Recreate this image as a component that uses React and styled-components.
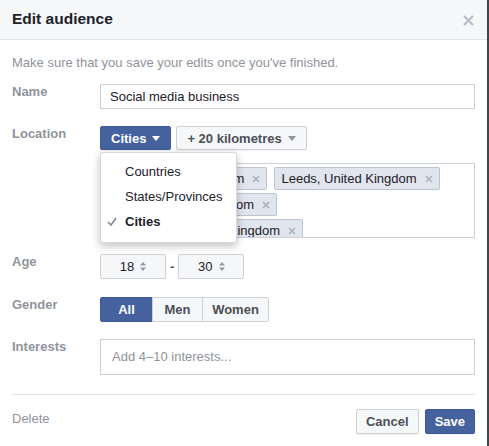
import React from "react";
import styled, { createGlobalStyle } from "styled-components";

const GlobalStyle = createGlobalStyle`
  html, body {
    margin: 0;
    padding: 0;
    background: #41444b;
  }
  body {
    font-family: "Liberation Sans", Arial, Helvetica, sans-serif;
    -webkit-font-smoothing: antialiased;
  }
`;

const tags = [
  "Derby, United Kingdom",
  "Leeds, United Kingdom",
  "London, United Kingdom",
  "Birmingham, United Kingdom",
];

const menuItems = [
  { label: "Countries" },
  { label: "States/Provinces" },
  { label: "Cities", checked: true },
];

function Caret({ color = "#fff" }) {
  return (
    <svg width="8" height="5" viewBox="0 0 8 5">
      <path d="M0 0h8L4 5z" fill={color} />
    </svg>
  );
}

function Spinner() {
  return (
    <svg width="6" height="9" viewBox="0 0 6 9">
      <path d="M3 0l3 3.4H0z M3 9l3-3.4H0z" fill="#9197a3" />
    </svg>
  );
}

function CloseIcon() {
  return (
    <svg width="11" height="11" viewBox="0 0 11 11">
      <path d="M1 1l9 9M10 1l-9 9" stroke="#b6bbc4" strokeWidth="2" />
    </svg>
  );
}

function TagX() {
  return (
    <svg width="8" height="8" viewBox="0 0 8 8">
      <path d="M1 1l6 6M7 1l-6 6" stroke="#aab0bc" strokeWidth="1.6" />
    </svg>
  );
}

function Check() {
  return (
    <svg width="10" height="9" viewBox="0 0 10 9">
      <path d="M1 5l3 3 5-7" stroke="#7f838c" strokeWidth="1.5" fill="none" />
    </svg>
  );
}

export default function App() {
  return (
    <>
      <GlobalStyle />
      <Dialog>
        <Header>
          <Title>Edit audience</Title>
          <CloseButton>
            <CloseIcon />
          </CloseButton>
        </Header>
        <Body>
          <Hint>Make sure that you save your edits once you've finished.</Hint>

          <Field $top={13}>
            <Label>Name</Label>
            <TextInput>Social media business</TextInput>
          </Field>

          <Field $top={17}>
            <Label>Location</Label>
            <LocationControl>
              <ButtonRow>
                <Button $primary>
                  Cities <Caret />
                </Button>
                <Button>
                  + 20 kilometres <Caret color="#8d949e" />
                </Button>
              </ButtonRow>
              <TagBox>
                {tags.map((t) => (
                  <Tag key={t}>
                    {t}
                    <TagX />
                  </Tag>
                ))}
              </TagBox>
              <Menu>
                {menuItems.map((m) => (
                  <MenuItem key={m.label} $checked={m.checked}>
                    <CheckSlot>{m.checked && <Check />}</CheckSlot>
                    {m.label}
                  </MenuItem>
                ))}
              </Menu>
            </LocationControl>
          </Field>

          <Field $top={16}>
            <Label>Age</Label>
            <ButtonRow>
              <AgeSelect>
                18 <Spinner />
              </AgeSelect>
              <Dash>-</Dash>
              <AgeSelect>
                30 <Spinner />
              </AgeSelect>
            </ButtonRow>
          </Field>

          <Field $top={18}>
            <Label>Gender</Label>
            <Segmented>
              <Segment $active $w={53}>All</Segment>
              <Segment $w={51}>Men</Segment>
              <Segment $w={67}>Women</Segment>
            </Segmented>
          </Field>

          <Field $top={17}>
            <Label>Interests</Label>
            <InterestInput>Add 4–10 interests...</InterestInput>
          </Field>

          <Divider />

          <Footer>
            <DeleteLink>Delete</DeleteLink>
            <FooterButtons>
              <Button>Cancel</Button>
              <Button $primary>Save</Button>
            </FooterButtons>
          </Footer>
        </Body>
      </Dialog>
    </>
  );
}

const Dialog = styled.div`
  width: 487px;
  height: 446px;
  background: #fff;
  overflow: hidden;
  color: #1d2129;
`;

const Header = styled.div`
  height: 40px;
  box-sizing: border-box;
  background: #f6f7f9;
  border-bottom: 1px solid #e5e5e5;
  display: flex;
  align-items: center;
  justify-content: space-between;
  padding: 0 13px 0 12px;
`;

const Title = styled.div`
  font-size: 15.5px;
  font-weight: bold;
  color: #1d2129;
  margin-top: -2px;
`;

const CloseButton = styled.div`
  display: flex;
  margin-top: 2px;
`;

const Body = styled.div`
  padding: 15px 11px 0 12px;
`;

const Hint = styled.div`
  font-size: 13px;
  line-height: 16px;
  color: #90949c;
`;

const Field = styled.div`
  display: grid;
  grid-template-columns: 88px 375px;
  align-items: start;
  margin-top: ${(p) => p.$top}px;
`;

const Label = styled.div`
  font-size: 13px;
  font-weight: bold;
  line-height: 16px;
  color: #90949c;
`;

const TextInput = styled.div`
  height: 25px;
  box-sizing: border-box;
  border: 1px solid #ccd0d5;
  padding: 0 9px;
  font-size: 13px;
  line-height: 23px;
  color: #1d2129;
`;

const LocationControl = styled.div`
  position: relative;
`;

const ButtonRow = styled.div`
  display: flex;
  align-items: center;
  gap: 5px;
`;

const Button = styled.div`
  height: 24px;
  box-sizing: border-box;
  display: inline-flex;
  align-items: center;
  gap: 6px;
  padding: 0 10px;
  border-radius: 2px;
  font-size: 13px;
  font-weight: bold;
  border: 1px solid ${(p) => (p.$primary ? "#3d5a96" : "#ced0d4")};
  background: ${(p) => (p.$primary ? "#45629f" : "#f6f7f9")};
  color: ${(p) => (p.$primary ? "#fff" : "#4b4f56")};
  box-shadow: 0 1px 1px rgba(0, 0, 0, 0.05);
`;

const TagBox = styled.div`
  margin-top: 13px;
  height: 75px;
  box-sizing: border-box;
  border: 1px solid #ccd0d5;
  padding: 3px;
  overflow: hidden;
  display: flex;
  flex-wrap: wrap;
  align-content: flex-start;
  gap: 3px 7px;
`;

const Tag = styled.div`
  height: 23px;
  box-sizing: border-box;
  display: inline-flex;
  align-items: center;
  gap: 8px;
  padding: 0 6px;
  background: #e1e5ee;
  border: 1px solid #bcc3d3;
  border-radius: 2px;
  font-size: 13px;
  color: #1d2129;
`;

const Menu = styled.div`
  position: absolute;
  top: 26px;
  left: 0;
  width: 137px;
  box-sizing: border-box;
  padding: 6px 0 8px;
  background: #fff;
  border: 1px solid rgba(0, 0, 0, 0.15);
  border-radius: 3px;
  box-shadow: 0 3px 8px rgba(0, 0, 0, 0.25);
`;

const MenuItem = styled.div`
  height: 25px;
  display: flex;
  align-items: center;
  font-size: 13px;
  font-weight: ${(p) => (p.$checked ? "bold" : "normal")};
  color: #1d2129;
`;

const CheckSlot = styled.span`
  width: 24px;
  display: inline-flex;
  justify-content: flex-end;
  box-sizing: border-box;
  padding-right: 8px;
`;

const AgeSelect = styled.div`
  width: 66px;
  height: 25px;
  box-sizing: border-box;
  display: inline-flex;
  align-items: center;
  justify-content: center;
  gap: 6px;
  border: 1px solid #ced0d4;
  border-radius: 2px;
  background: #f6f7f9;
  font-size: 13px;
  color: #1d2129;
`;

const Dash = styled.span`
  font-size: 13px;
  font-weight: bold;
  color: #4b4f56;
  margin: 0 -1px;
`;

const Segmented = styled.div`
  display: flex;
`;

const Segment = styled.div`
  width: ${(p) => p.$w}px;
  height: 25px;
  box-sizing: border-box;
  display: flex;
  align-items: center;
  justify-content: center;
  font-size: 13px;
  font-weight: bold;
  border: 1px solid ${(p) => (p.$active ? "#3d5a96" : "#ced0d4")};
  margin-left: -1px;
  background: ${(p) => (p.$active ? "#45629f" : "#f6f7f9")};
  color: ${(p) => (p.$active ? "#fff" : "#4b4f56")};
  &:first-child {
    margin-left: 0;
    border-radius: 2px 0 0 2px;
  }
  &:last-child {
    border-radius: 0 2px 2px 0;
  }
`;

const InterestInput = styled.div`
  height: 36px;
  box-sizing: border-box;
  border: 1px solid #ccd0d5;
  padding: 0 11px;
  font-size: 13px;
  line-height: 34px;
  color: #90949c;
`;

const Divider = styled.div`
  height: 1px;
  background: #e5e5e5;
  margin-top: 19px;
  width: 463px;
`;

const Footer = styled.div`
  display: flex;
  align-items: center;
  justify-content: space-between;
  width: 463px;
  margin-top: 14px;
`;

const DeleteLink = styled.span`
  font-size: 13px;
  color: #90949c;
  margin-top: -7px;
`;

const FooterButtons = styled.div`
  display: flex;
  gap: 6px;
  ${Button} {
    height: 25px;
    padding: 0 9px;
  }
`;
